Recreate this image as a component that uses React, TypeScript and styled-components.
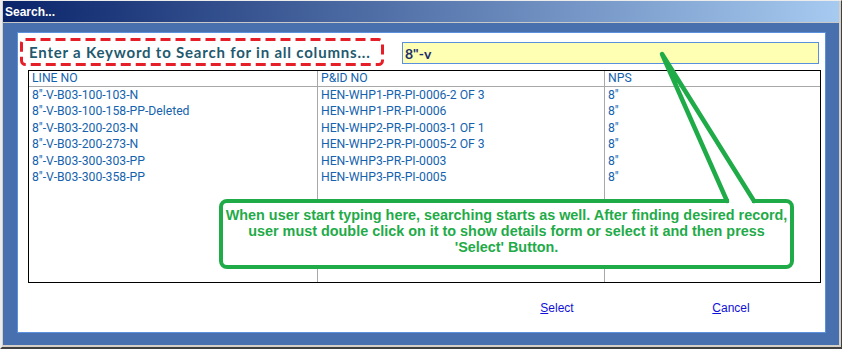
import styled, { createGlobalStyle } from 'styled-components'

const GlobalStyle = createGlobalStyle`
  html, body {
    margin: 0;
    padding: 0;
    background: #d4d0c8;
  }
  * {
    box-sizing: border-box;
  }
`

const WindowUI = styled.div`
  position: relative;
  width: 842px;
  height: 349px;
  display: flex;
  flex-direction: column;
  background: #d4d0c8;
  border-style: solid;
  border-width: 1px 1px 2px 2px;
  border-color: #ececec #404040 #404040 #ececec;
  padding: 0 2px 2px 1px;
  overflow: hidden;
`

const TitleBar = styled.div`
  height: 22px;
  flex: none;
  display: flex;
  align-items: center;
  padding-left: 2px;
  background: linear-gradient(to right, #0a246a, #a6caf0);
  border-bottom: 1px solid #c8c8c8;
  color: #fff;
  font: bold 12px 'Liberation Sans', Arial, sans-serif;
`

const Frame = styled.div`
  flex: 1;
  display: flex;
  background: #4870ae;
  padding: 9px 13px 12px 14px;
`

const Content = styled.div`
  flex: 1;
  display: flex;
  flex-direction: column;
  background: #fff;
  border: 1px solid #5b90dc;
`

const SearchRow = styled.div`
  display: flex;
  align-items: flex-start;
  gap: 18px;
  margin: 5px 0 0 2px;
`

const KeywordLabel = styled.div`
  position: relative;
  width: 364px;
  height: 28px;
  display: flex;
  align-items: center;
  padding-left: 9px;
  color: #1f5a6f;
  font: bold 15px Lato, 'Noto Sans', sans-serif;
  letter-spacing: 0.8px;
  white-space: nowrap;

  > svg {
    position: absolute;
    inset: 0;
  }
`

const KeywordInput = styled.input`
  width: 417px;
  height: 22px;
  margin-top: 4px;
  padding: 0 2px;
  background: #ffffb4;
  border: 1px solid #5b90dc;
  outline: none;
  color: #1c2f6b;
  font: bold 14px Lato, 'Noto Sans', sans-serif;
`

const Grid = styled.div`
  width: 793px;
  height: 213px;
  margin: 4px 0 0 10px;
  border: 1px solid #000;
  display: grid;
  grid-template-columns: 288px 287px 1fr;
  grid-template-rows: 16px repeat(6, 16.4px) 1fr;
  font: 12.2px Roboto, 'Liberation Sans', sans-serif;
  color: #1563ae;
`

const HeadCell = styled.div<{ $first?: boolean }>`
  line-height: 15px;
  padding-left: 3px;
  border-bottom: 1px solid #a8a8a8;
  border-left: ${(p) => (p.$first ? 'none' : '1px solid #a8a8a8')};
  white-space: nowrap;
`

const Cell = styled.div<{ $first?: boolean }>`
  line-height: 16.4px;
  padding-left: 3px;
  border-left: ${(p) => (p.$first ? 'none' : '1px solid #a8a8a8')};
  white-space: nowrap;
  overflow: hidden;
`

const ButtonRow = styled.div`
  display: flex;
  justify-content: flex-end;
  gap: 78px;
  margin-top: 13px;
  padding-right: 46px;
`

const LinkButton = styled.button`
  width: 96px;
  height: 24px;
  background: transparent;
  border: none;
  color: #1010d8;
  font: 12px 'Liberation Sans', Arial, sans-serif;
  cursor: pointer;

  > u {
    text-decoration-thickness: 1px;
  }
`

const Callout = styled.div`
  position: absolute;
  left: 217px;
  top: 198px;
  width: 575px;
  height: 70px;
  padding-top: 4px;
  background: #fff;
  border: 4px solid #1fab48;
  border-radius: 8px;
  color: #1fab48;
  font: bold 14.4px 'Liberation Sans', Arial, sans-serif;
  line-height: 16px;
  text-align: center;
  white-space: nowrap;
`

const Pointer = styled.svg`
  position: absolute;
  left: 0;
  top: 0;
  pointer-events: none;
`

const rows = [
  ['8"-V-B03-100-103-N', 'HEN-WHP1-PR-PI-0006-2 OF 3', '8"'],
  ['8"-V-B03-100-158-PP-Deleted', 'HEN-WHP1-PR-PI-0006', '8"'],
  ['8"-V-B03-200-203-N', 'HEN-WHP2-PR-PI-0003-1 OF 1', '8"'],
  ['8"-V-B03-200-273-N', 'HEN-WHP2-PR-PI-0005-2 OF 3', '8"'],
  ['8"-V-B03-300-303-PP', 'HEN-WHP3-PR-PI-0003', '8"'],
  ['8"-V-B03-300-358-PP', 'HEN-WHP3-PR-PI-0005', '8"'],
]

export default function App() {
  return (
    <>
      <GlobalStyle />
      <WindowUI>
        <TitleBar>Search...</TitleBar>
        <Frame>
          <Content>
            <SearchRow>
              <KeywordLabel>
                <svg width="364" height="28">
                  <rect
                    x="1.5"
                    y="1.5"
                    width="361"
                    height="25"
                    rx="4"
                    fill="none"
                    stroke="#e61e28"
                    strokeWidth="3"
                    strokeDasharray="10 5"
                  />
                </svg>
                Enter a Keyword to Search for in all columns...
              </KeywordLabel>
              <KeywordInput defaultValue={'8"-v'} />
            </SearchRow>
            <Grid>
              <HeadCell $first>LINE NO</HeadCell>
              <HeadCell>P&amp;ID NO</HeadCell>
              <HeadCell>NPS</HeadCell>
              {rows.map((r, i) =>
                r.map((c, j) => (
                  <Cell key={`${i}-${j}`} $first={j === 0}>
                    {c}
                  </Cell>
                ))
              )}
              <Cell $first />
              <Cell />
              <Cell />
            </Grid>
            <ButtonRow>
              <LinkButton>
                <u>S</u>elect
              </LinkButton>
              <LinkButton>
                <u>C</u>ancel
              </LinkButton>
            </ButtonRow>
          </Content>
        </Frame>
        <Callout>
          When user start typing here, searching starts as well. After finding desired record,
          <br />
          user must double click on it to show details form or select it and then press
          <br />
          'Select' Button.
        </Callout>
        <Pointer width="842" height="349">
          <rect x="727" y="196" width="23" height="8" fill="#fff" />
          <path
            d="M725 200 L660 53 L752 200"
            fill="none"
            stroke="#1fab48"
            strokeWidth="4.5"
            strokeLinecap="round"
            strokeLinejoin="round"
          />
        </Pointer>
      </WindowUI>
    </>
  )
}
